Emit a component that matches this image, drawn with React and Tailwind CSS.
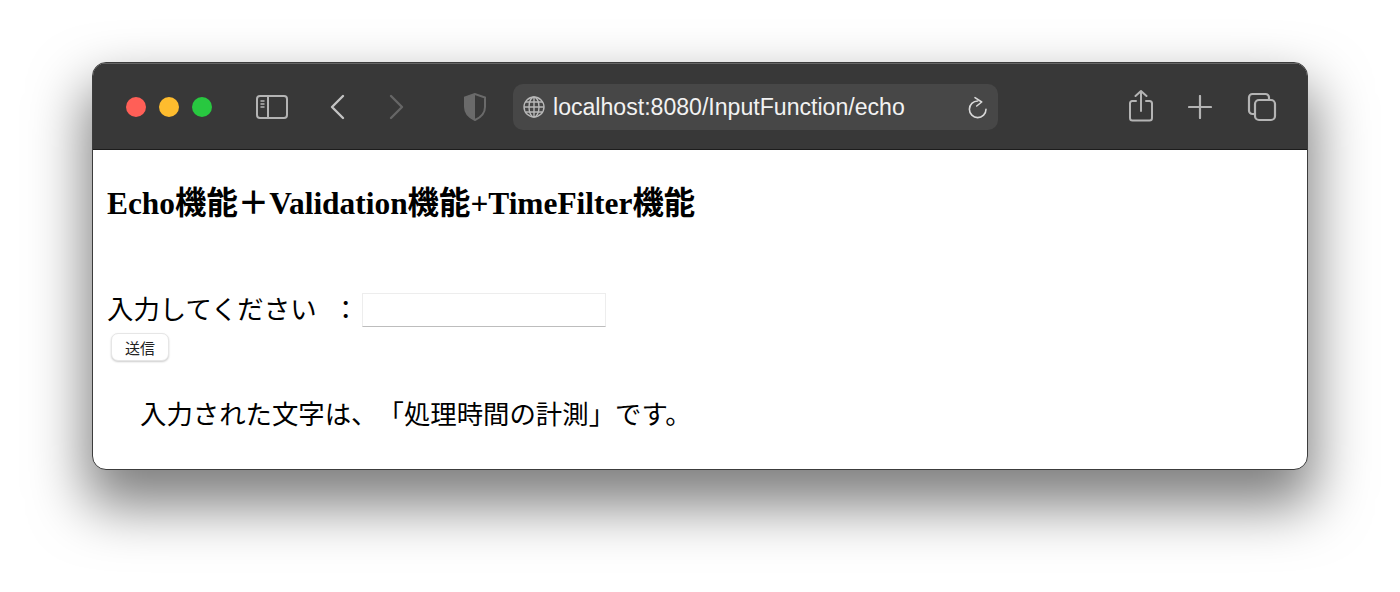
export default function App() {
  const serif = "font-['Liberation_Serif','Noto_Sans_CJK_JP',serif]";
  return (
    <div className="w-[1400px] h-[592px] bg-white pt-[62px] pl-[92px] overflow-hidden">
      <div className="w-[1216px] h-[408px] rounded-[14px] overflow-hidden border border-[#3c3c3c] bg-white shadow-[0_30px_55px_6px_rgba(0,0,0,0.5)] flex flex-col">
        <header className="h-[87px] shrink-0 bg-[#383838] border-b border-[#1c1c1c] border-t border-t-[#666] flex items-center pl-[33px] pr-[30px]">
          <div className="flex gap-[13px]">
            <span className="w-5 h-5 rounded-full bg-[#ff5f57]" />
            <span className="w-5 h-5 rounded-full bg-[#febc2e]" />
            <span className="w-5 h-5 rounded-full bg-[#28c840]" />
          </div>
          <svg className="ml-[43px]" width="34" height="28" viewBox="0 0 34 28" fill="none" stroke="#b4b4b4" strokeWidth="2">
            <rect x="2" y="3" width="30" height="22" rx="3" />
            <path d="M13 3v22" />
            <path d="M5.5 8h4M5.5 11h4M5.5 14h4" strokeWidth="1.3" />
          </svg>
          <svg className="ml-[39px]" width="20" height="28" viewBox="0 0 20 28" fill="none" stroke="#c4c4c4" strokeWidth="2.4" strokeLinecap="round" strokeLinejoin="round">
            <path d="M15 3 4 14l11 11" />
          </svg>
          <svg className="ml-[38px]" width="20" height="28" viewBox="0 0 20 28" fill="none" stroke="#666" strokeWidth="2.4" strokeLinecap="round" strokeLinejoin="round">
            <path d="M5 3l11 11L5 25" />
          </svg>
          <svg className="ml-[56px]" width="26" height="30" viewBox="0 0 26 30" fill="none">
            <path d="M13 2 3 5.5V15c0 6.5 4.5 10.500 10 13 5.500-2.500 10-6.500 10-13V5.500z" stroke="#6a6a6a" strokeWidth="2" />
            <path d="M13 2 3 5.500V15c0 6.500 4.500 10.500 10 13z" fill="#6a6a6a" />
          </svg>
          <div className="ml-[25px] w-[485px] h-[46px] rounded-[10px] bg-[#474747] flex items-center pl-[10px] pr-[11px]">
            <svg width="22" height="22" viewBox="0 0 22 22" fill="none" stroke="#b8b8b8" strokeWidth="1.4">
              <circle cx="11" cy="11" r="10" />
              <ellipse cx="11" cy="11" rx="5" ry="10" />
              <path d="M11 1v20M1 11h20M2.500 6h17M2.500 16h17" />
            </svg>
            <span className="ml-[8px] pt-[2px] text-[23.1px] leading-none text-[#f2f2f2] font-['Liberation_Sans',sans-serif]">localhost:8080/InputFunction/echo</span>
            <svg className="ml-auto" width="20" height="24" viewBox="0 0 20 24" fill="none" stroke="#d8d8d8" strokeWidth="1.6" strokeLinecap="round" strokeLinejoin="round">
              <path d="M10.700 6A8.300 8.300 0 1 0 19 14.300" />
              <path d="M8 2.700 14.700 7 9.700 11" />
            </svg>
          </div>
          <svg className="ml-auto" width="28" height="34" viewBox="0 1 28 34" fill="none" stroke="#b4b4b4" strokeWidth="2" strokeLinecap="round" strokeLinejoin="round">
            <path d="M9 12H5a2.500 2.500 0 0 0-2 2.500V29a2.500 2.500 0 0 0 2.500 2.500h17A2.500 2.500 0 0 0 25 29V14.500a2.500 2.500 0 0 0-2.500-2.500H19" />
            <path d="M14 22V2M8.500 7 14 2l5.500 5" />
          </svg>
          <svg className="ml-[33px]" width="24" height="24" viewBox="0 0 24 24" fill="none" stroke="#b4b4b4" strokeWidth="2.2" strokeLinecap="round">
            <path d="M12 1v22M1 12h22" />
          </svg>
          <svg className="ml-[35px]" width="30" height="30" viewBox="0 0 30 30" fill="none" stroke="#b4b4b4" strokeWidth="2.200">
            <path d="M7 22H5.500A3.500 3.500 0 0 1 2 18.500V5.500A3.500 3.500 0 0 1 5.500 2h13A3.500 3.500 0 0 1 22 5.500V7" />
            <rect x="8" y="8" width="20" height="20" rx="4" />
          </svg>
        </header>
        <main className={`${serif} flex-1 text-black pl-[14px] text-[26.4px] leading-[30px] [text-spacing-trim:space-all]`}>
          <h3 className="mt-[38px] text-[31.4px] leading-[32px] font-bold">Echo機能＋Validation機能+TimeFilter機能</h3>
          <div className="mt-[72px] flex items-center h-[36px]">
            <span>入力してください</span>
            <span className="ml-[16px]">：</span>
            <input className="ml-[3px] w-[244px] h-[34px] bg-white border border-[#ededed] border-b-[#bdbdbd] outline-none" />
          </div>
          <button className="ml-[4px] mt-[5px] block w-[58px] h-[28px] rounded-[7px] bg-white border border-[#e6e6e6] shadow-[0_1px_2px_rgba(0,0,0,0.2)] text-[15px] leading-none text-[#222] font-['Noto_Sans_CJK_JP',sans-serif]">送信</button>
          <p className="ml-[33px] mt-[39px]">入力された文字は、「処理時間の計測」です。</p>
        </main>
      </div>
    </div>
  );
}
